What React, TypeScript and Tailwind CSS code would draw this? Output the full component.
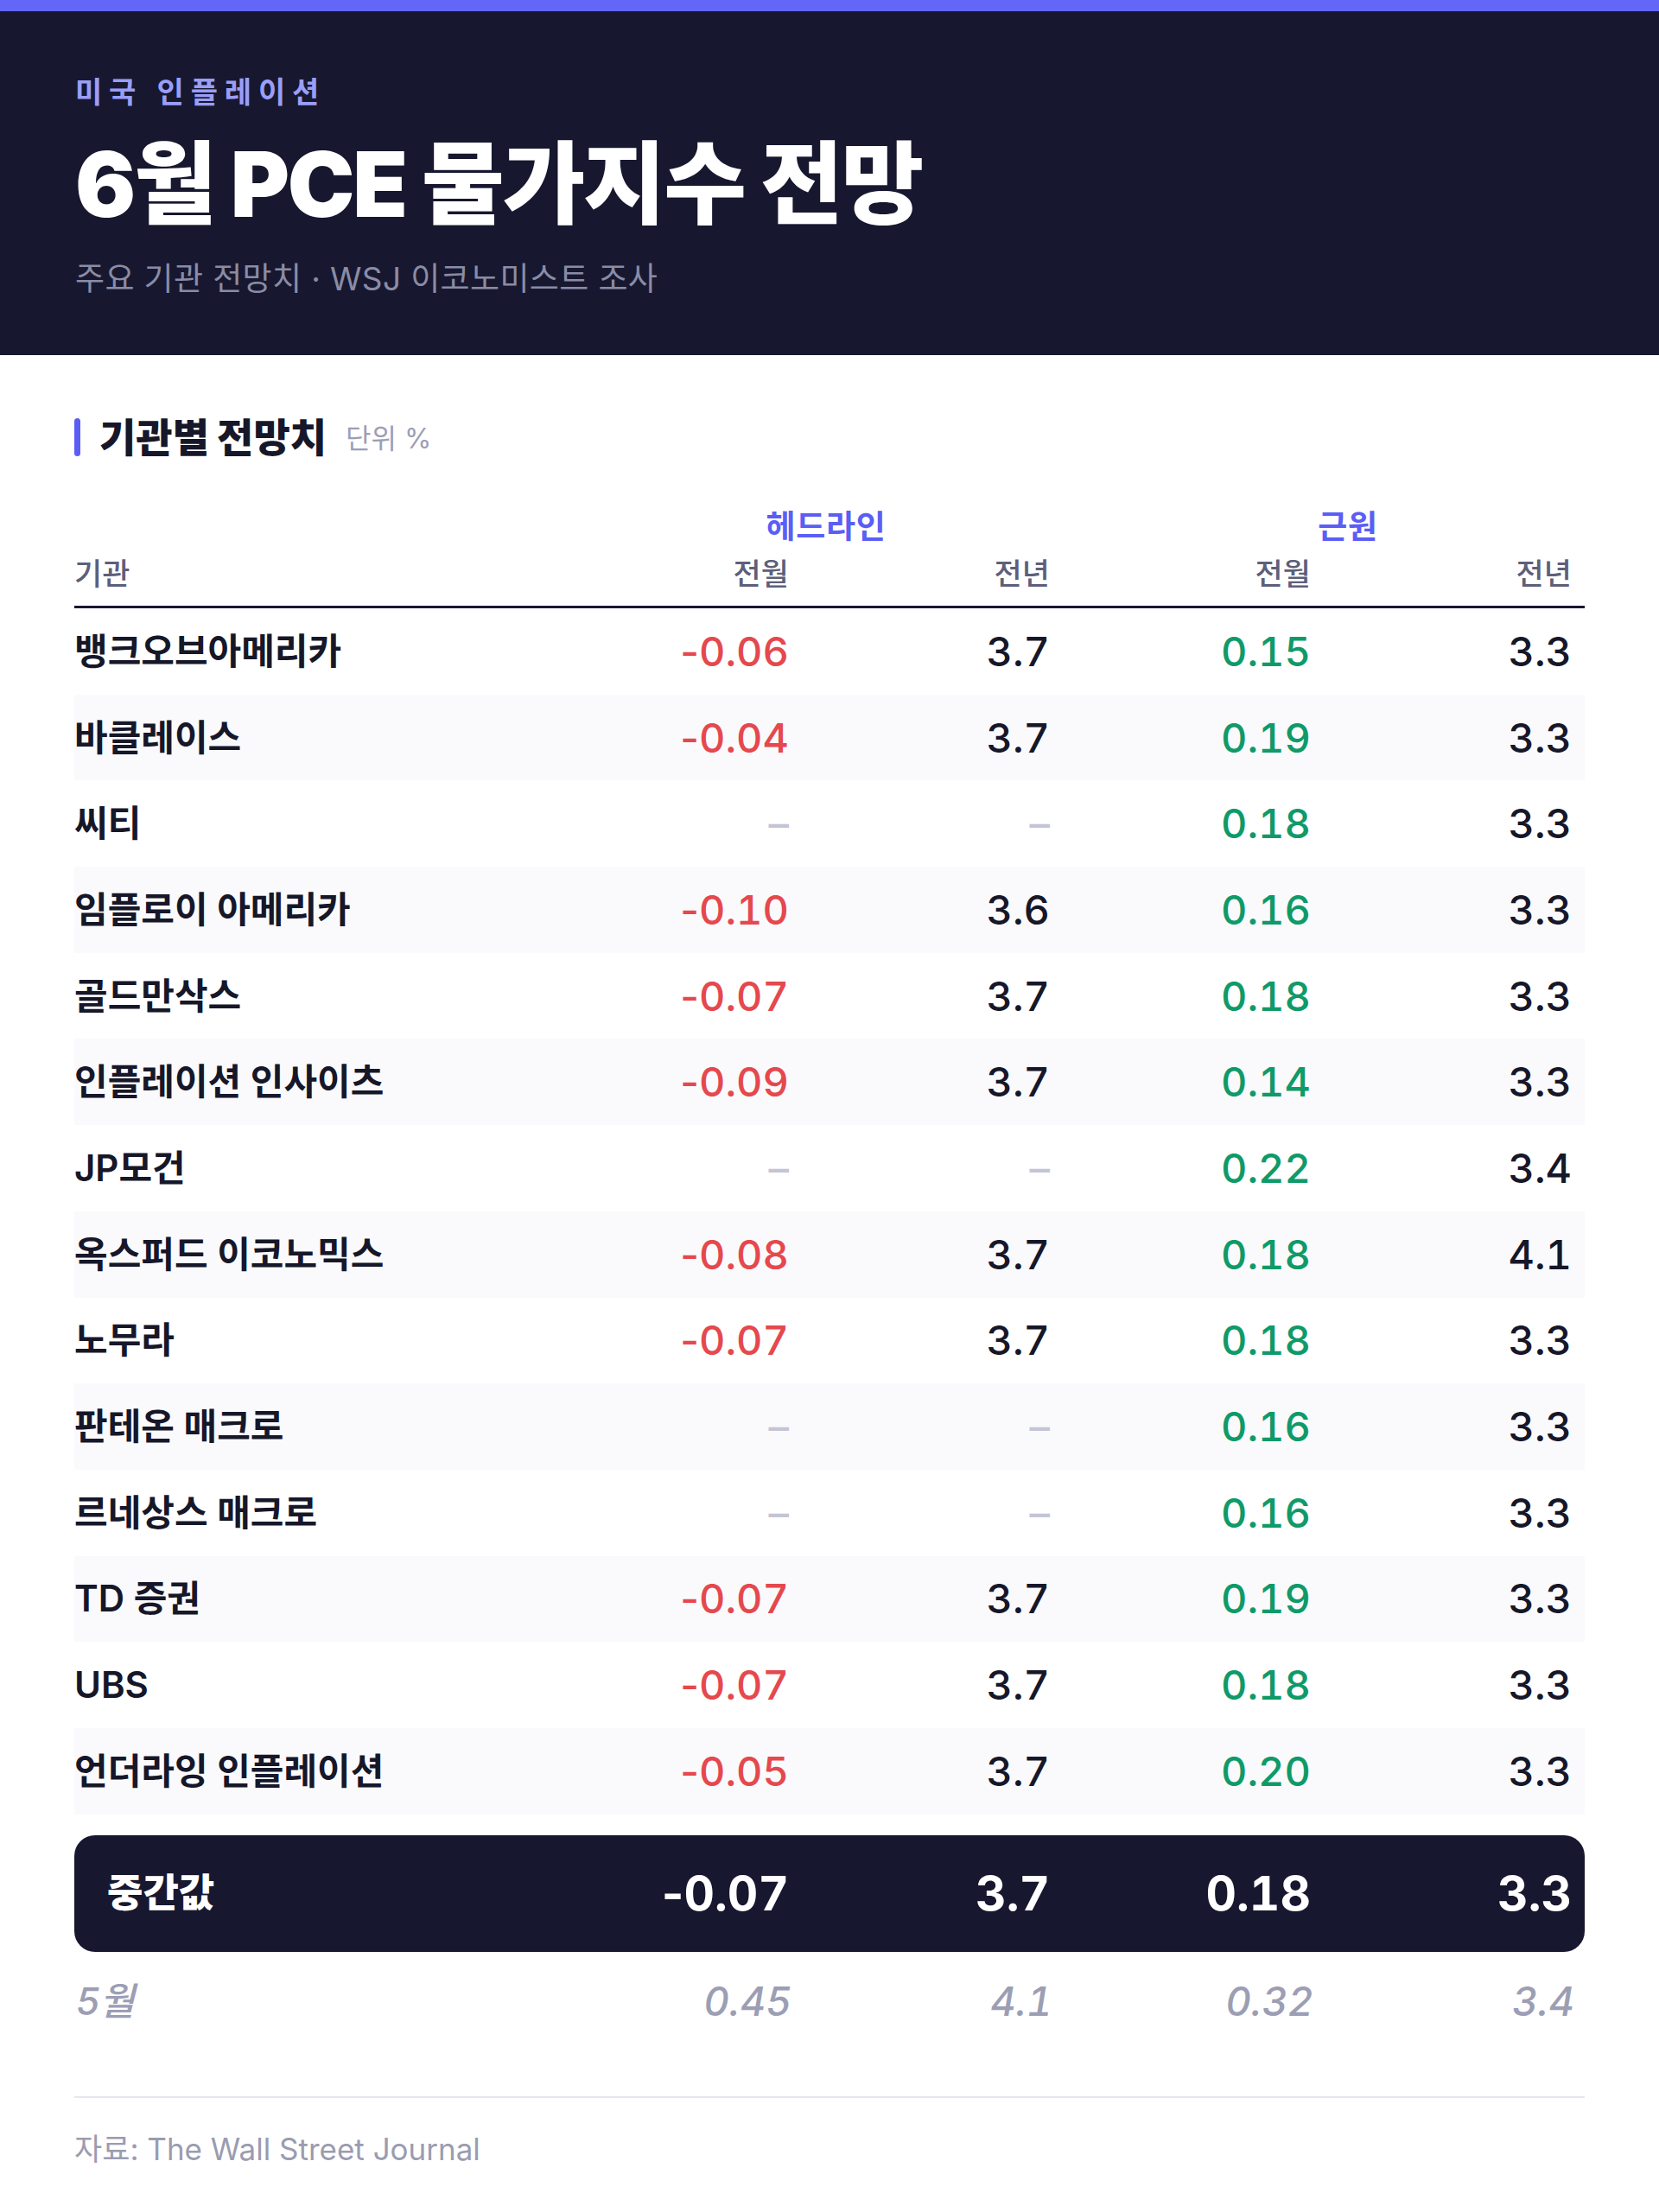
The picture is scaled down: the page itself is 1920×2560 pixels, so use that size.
import React from 'react';

type Row = {
  name: string;
  hm: string | null;
  hy: string | null;
  cm: string;
  cy: string;
};

const rows: Row[] = [
  { name: '뱅크오브아메리카', hm: '-0.06', hy: '3.7', cm: '0.15', cy: '3.3' },
  { name: '바클레이스', hm: '-0.04', hy: '3.7', cm: '0.19', cy: '3.3' },
  { name: '씨티', hm: null, hy: null, cm: '0.18', cy: '3.3' },
  { name: '임플로이 아메리카', hm: '-0.10', hy: '3.6', cm: '0.16', cy: '3.3' },
  { name: '골드만삭스', hm: '-0.07', hy: '3.7', cm: '0.18', cy: '3.3' },
  { name: '인플레이션 인사이츠', hm: '-0.09', hy: '3.7', cm: '0.14', cy: '3.3' },
  { name: 'JP모건', hm: null, hy: null, cm: '0.22', cy: '3.4' },
  { name: '옥스퍼드 이코노믹스', hm: '-0.08', hy: '3.7', cm: '0.18', cy: '4.1' },
  { name: '노무라', hm: '-0.07', hy: '3.7', cm: '0.18', cy: '3.3' },
  { name: '판테온 매크로', hm: null, hy: null, cm: '0.16', cy: '3.3' },
  { name: '르네상스 매크로', hm: null, hy: null, cm: '0.16', cy: '3.3' },
  { name: 'TD 증권', hm: '-0.07', hy: '3.7', cm: '0.19', cy: '3.3' },
  { name: 'UBS', hm: '-0.07', hy: '3.7', cm: '0.18', cy: '3.3' },
  { name: '언더라잉 인플레이션', hm: '-0.05', hy: '3.7', cm: '0.20', cy: '3.3' },
];

const grid = 'grid grid-cols-[1fr_302px_302px_302px_302px]';

// tabular digits, but keep the minus sign tight against the number
function Num({ value }: { value: string }) {
  if (value.startsWith('-')) {
    return (
      <>
        <span>-</span>
        <span className="tabular-nums">{value.slice(1)}</span>
      </>
    );
  }
  return <span className="tabular-nums">{value}</span>;
}

function Cell({ value, color }: { value: string | null; color: string }) {
  return (
    <div className={`pr-[15px] text-right text-[47px] leading-[56px] font-medium ${color}`}>
      {value === null ? <span className="text-[#c3c5d6]">–</span> : <Num value={value} />}
    </div>
  );
}

export default function App() {
  return (
    <div className="w-[1920px] min-h-[2560px] bg-white font-['Inter','Noto_Sans_CJK_KR',sans-serif] text-[#161729]">
      {/* header */}
      <div className="h-[13px] bg-[#6366f6]" />
      <header className="bg-[#17182f] px-[87px] pt-[73px] pb-[66px]">
        <p className="text-[34px] leading-[42px] font-semibold tracking-[0.23em] text-[#9b9ef7]">미국 인플레이션</p>
        <h1 className="mt-[33px] text-[104px] leading-[104px] font-black tracking-[-0.022em] text-white">
          6월 PCE 물가지수 전망
        </h1>
        <p className="mt-[36px] text-[37px] leading-[44px] tracking-[0.01em] text-[#8a8ca6]">
          주요 기관 전망치 · WSJ 이코노미스트 조사
        </p>
      </header>

      <main className="px-[86px]">
        {/* section title */}
        <div className="mt-[68px] flex items-center gap-[22px]">
          <div className="h-[44px] w-[7px] rounded-full bg-[#5b5ef5]" />
          <h2 className="text-[46px] leading-[50px] font-black">기관별 전망치</h2>
          <span className="pt-[4px] text-[32px] leading-[50px] text-[#9c9eb6]">단위 %</span>
        </div>

        {/* group headers */}
        <div className={`${grid} mt-[55px] text-[37px] leading-[44px] font-bold tracking-[0.02em] text-[#5b5ef5]`}>
          <div />
          <div className="col-span-2 pl-[56px] text-center">헤드라인</div>
          <div className="col-span-2 pl-[56px] text-center">근원</div>
        </div>

        {/* sub headers */}
        <div className={`${grid} mt-[12px] border-b-[3px] border-[#17182f] pb-[17px] text-[35px] leading-[40px] font-medium text-[#5d5f7b]`}>
          <div>기관</div>
          <div className="pr-[15px] text-right">전월</div>
          <div className="pr-[15px] text-right">전년</div>
          <div className="pr-[15px] text-right">전월</div>
          <div className="pr-[15px] text-right">전년</div>
        </div>

        {/* rows */}
        <div>
          {rows.map((r, i) => (
            <div
              key={r.name}
              className={`${grid} h-[99.7px] items-center ${i % 2 === 1 ? 'bg-[#fafafd]' : ''}`}
            >
              <div className="text-[42px] leading-[48px] font-semibold">{r.name}</div>
              <Cell value={r.hm} color="text-[#e5484d]" />
              <Cell value={r.hy} color="text-[#161729]" />
              <Cell value={r.cm} color="text-[#0f9a68]" />
              <Cell value={r.cy} color="text-[#161729]" />
            </div>
          ))}
        </div>

        {/* median */}
        <div className={`${grid} mt-[24px] h-[135px] items-center rounded-3xl bg-[#17182f] text-white`}>
          <div className="pl-[38px] text-[45px] leading-[52px] font-black">중간값</div>
          <div className="pr-[15px] text-right text-[55px] leading-[60px] font-bold"><Num value="-0.07" /></div>
          <div className="pr-[15px] text-right text-[55px] leading-[60px] font-bold"><Num value="3.7" /></div>
          <div className="pr-[15px] text-right text-[55px] leading-[60px] font-bold"><Num value="0.18" /></div>
          <div className="pr-[15px] text-right text-[55px] leading-[60px] font-bold"><Num value="3.3" /></div>
        </div>

        {/* previous month */}
        <div className={`${grid} mt-[27px] h-[60px] items-center text-[46px] leading-[56px] font-medium italic text-[#9c9eb4]`}>
          <div className="pl-[2px] text-[44px]">5월</div>
          <div className="pr-[12px] text-right"><Num value="0.45" /></div>
          <div className="pr-[12px] text-right"><Num value="4.1" /></div>
          <div className="pr-[12px] text-right"><Num value="0.32" /></div>
          <div className="pr-[12px] text-right"><Num value="3.4" /></div>
        </div>

        <div className="mt-[80px] border-t-2 border-[#e6e6ef]" />

        <p className="mt-[39px] text-[35px] leading-[40px] text-[#9a9cb0]">자료: The Wall Street Journal</p>
      </main>
    </div>
  );
}
